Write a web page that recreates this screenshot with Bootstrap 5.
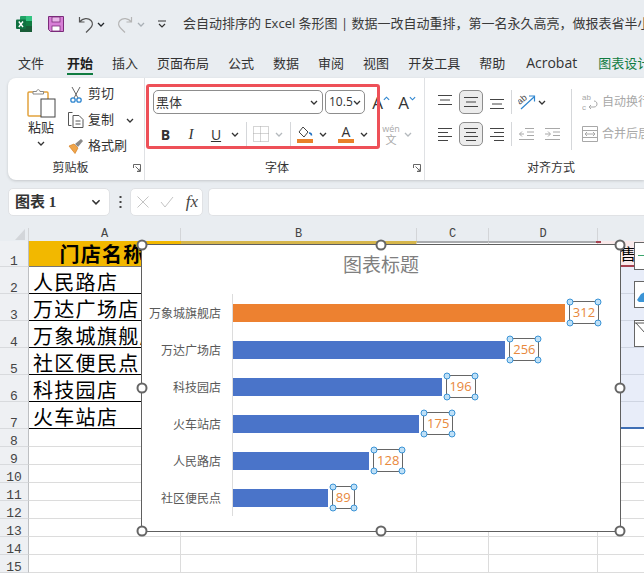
<!DOCTYPE html>
<html lang="zh-CN">
<head>
    <meta charset="UTF-8">
    <meta name="viewport" content="width=device-width, initial-scale=1.0">
    <title>Excel 条形图</title>
    <link href="https://cdn.jsdelivr.net/npm/bootstrap@5.3.0/dist/css/bootstrap.min.css" rel="stylesheet">
    <style>
        html, body { height: 100%; }
        body {
            width: 644px; height: 573px; overflow: hidden; background: #e9edf1; color: #333;
            font-family: "Open Sans", "Noto Sans CJK SC", sans-serif; font-size: 13px;
        }
        svg { display: block; flex: none; }
        .tw-6 { width: 6px; } .tw-10 { width: 10px; } .tw-14 { width: 14px; } .tw-16 { width: 16px; }
        .tw-18 { width: 18px; } .tw-20 { width: 20px; } .tw-24 { width: 24px; } .tw-25 { width: 25px; }
        .tw-26 { width: 26px; } .tw-30 { width: 30px; }
        .gl-2 { margin-left: 2px; } .gl-3 { margin-left: 3px; } .gl-5 { margin-left: 5px; } .gl-6 { margin-left: 6px; }
        .gl-12 { margin-left: 12px; } .gl-14 { margin-left: 14px; } .gl-16 { margin-left: 16px; }

        .title-row { height: 48px; padding-left: 16px; }
        .doc-title { font-size: 13px; white-space: nowrap; color: #3a3a3a; }
        .tab-row { height: 30px; padding-left: 18px; gap: 19px; font-size: 13px; line-height: 30px; white-space: nowrap; }
        .tab-on { font-weight: 700; color: #1f1f1f; position: relative; margin-left: 4px; }
        .tab-on::after { content: ""; position: absolute; left: 0; right: 0; top: 25px; height: 2px; background: #107c41; }
        .tab-latin { font-size: 14px; margin: 0 2px; }
        .tab-green { color: #107c41; }

        .ribbon { height: 102px; margin-left: 8px; background: #fff; border-radius: 8px 0 0 8px; box-shadow: 0 1px 3px rgba(0,0,0,.16); overflow: hidden; }
        .rgroup { flex: none; display: flex; flex-direction: column; border-right: 1px solid #dfe1e4; margin: 0; position: relative; }
        .rg-clip { width: 137px; }
        .rg-font { width: 280px; padding-left: 8px; }
        .rg-align { width: 244px; padding-left: 8px; border-right: 0; }
        .rg-body { height: 78px; }
        .rg-foot { height: 24px; margin-top: auto; font-size: 12px; line-height: 24px; }
        .rg-name { flex: 1 1 auto; text-align: center; }
        .rg-font .rg-foot { margin-left: -8px; }
        .rg-font .rg-name { padding-right: 4px; }
        .launch { width: 8px; margin: 0 3px 0 0; }
        .paste-col { width: 60px; padding: 10px 0 0 6px; font-size: 13px; line-height: 16px; }
        .paste-word { margin: 1px 0 6px; }
        .tool-line { height: 26px; gap: 4px; }
        .tool-col { padding-top: 3px; }
        .tool-ico { width: 16px; }
        .rrow { height: 24px; }
        .rrow + .rrow { margin-top: 8px; }
        .rows-top { padding-top: 12px; }
        .tcell { flex: none; height: 24px; display: flex; align-items: center; justify-content: center; }
        .tsep { flex: none; width: 1px; height: 24px; background: #d5d7da; }
        .tsep-b { margin: 0 4px 0 3px; }
        .sel-box { height: 24px; background: #fff; border: 1px solid #8d8d8d; border-radius: 5px; font-size: 13px; }
        .sel-face { width: 170px; padding: 0 4px 0 2px; font-family: "Noto Sans CJK SC", sans-serif; }
        .sel-size { width: 40px; margin-left: 2px; padding: 0 3px 0 3px; font-size: 12px; }
        .fmt { font-size: 14px; color: #333; }
        .fmt-b { font-weight: 700; }
        .fmt-i { font-style: italic; font-family: "Liberation Serif", serif; font-size: 15px; }
        .fmt-u { text-decoration: underline; }
        .big-a { font-size: 17px; line-height: 1; }
        .wen { flex-direction: column; color: #a9a9a9; font-size: 9px; line-height: 10px; }
        .wen b { font-weight: 400; font-size: 11px; line-height: 11px; }
        .al-on { background: #ececec; border: 1px solid #8d8d8d; border-radius: 5px; }
        .al-tall { width: 1px; height: 61px; background: #d5d7da; margin: -1px 10px 0 0; }
        .al-left { width: 138px; }
        .gray-tool { color: #a8a8a8; font-size: 12px; white-space: nowrap; gap: 4px; }

        .fx-row { height: 28px; margin-top: 8px; margin-left: 8px; }
        .fx-box { height: 28px; background: #fff; border: 1px solid #e0e2e5; border-radius: 5px; }
        .fx-name { width: 102px; padding: 0 8px 0 6px; font-family: "Liberation Serif", "Noto Sans CJK SC", serif; font-weight: 700; font-size: 15px; }
        .fx-dots { width: 20px; }
        .fx-btns { width: 73px; padding: 0 4px 0 6px; }
        .fx-sym { font-family: "Liberation Serif", serif; font-style: italic; font-size: 17px; color: #444; }
        .fx-input { flex: 1 1 auto; margin-left: 5px; border-right: 0; border-radius: 5px 0 0 5px; }

        .sheet { position: relative; margin-top: 12px; height: 345px; }
        .sheet-grid {
            display: grid; height: 345px; background: #fff;
            grid-template-columns: 29px 152px 236px 72px 109px 46px;
            grid-template-rows: 13px 26px repeat(6, 27px) repeat(8, 18px);
        }
        .cell { border-right: 1px solid #dcdcdc; border-bottom: 1px solid #dcdcdc; overflow: hidden; white-space: nowrap; }
        .col-head { background: #e9edf1; border-bottom: 0; border-right: 1px solid #d3d5d8; font-family: "Liberation Mono", monospace; font-size: 12px; line-height: 13px; text-align: center; color: #444; }
        .row-head { background: #eef0f3; border-right: 1px solid #bdbfc2; border-bottom: 1px solid #d8dadd; font-family: "Liberation Mono", monospace; font-size: 13px; line-height: 8px; text-align: center; color: #444; display: flex; align-items: flex-end; justify-content: center; }
        .corner { background: #e9edf1; border-right: 1px solid #d3d5d8; display: flex; justify-content: flex-end; padding-right: 3px; }
        .store-cell { font-family: "Noto Sans CJK SC", sans-serif; font-size: 20px; line-height: 30px; letter-spacing: 1.3px; color: #000; padding-left: 4px; border-bottom: 1px solid #000; border-right: 0; }
        .store-head { background: #f2b800; font-weight: 700; text-align: center; padding: 0 6px 0 0; line-height: 26px; border-bottom-color: #777; }
        .top-gold { border-top: 3px solid #d6b64b; }
        .top-gray { border-top: 2px solid #a9abae; }
        .sales-head { background: #f9e9ea; border-bottom: 2px solid #a6404f; border-right: 0; font-family: "Noto Sans CJK SC", sans-serif; font-size: 16px; line-height: 24px; color: #000; padding-left: 6px; }
        .sales-cell { background: #e8edf9; border-right: 0; border-bottom-color: #cfd5e2; }
        .sales-last { border-bottom: 2px solid #3f6fb5; }

        .chart-box { position: absolute; left: 141px; top: 16px; width: 480px; height: 288px; background: #fff; border: 1px solid #5f5f5f; }
        .chart-title { height: 49px; font-family: "Noto Sans CJK SC", sans-serif; font-size: 19px; line-height: 38px; text-align: center; color: #7f7f7f; }
        .bar-row { height: 37px; font-family: "Noto Sans CJK SC", sans-serif; }
        .bar-name { width: 79px; margin-right: 11px; text-align: right; font-size: 12px; color: #595959; white-space: nowrap; }
        .bar-area { height: 37px; border-left: 1px solid #dcdcdc; }
        .bar-fill { height: 18px; background: #4a74c9; }
        .bar-top { background: #ed8130; }
        .data-tag { position: relative; width: 30px; height: 23px; margin-left: 4px; border: 1px solid #666; color: #e8883c; font-family: "Open Sans", sans-serif; font-size: 13px; line-height: 21px; text-align: center; }
        .data-tag.narrow { width: 23px; }
        .dot { position: absolute; width: 7px; height: 7px; border-radius: 50%; background: #bfe0f7; border: 1px solid #3b94d6; transform: translate(-50%, -50%); }
        .grip { position: absolute; width: 11px; height: 11px; border-radius: 50%; background: #fff; border: 2px solid #666; transform: translate(-50%, -50%); }
        .at-l { left: 0; } .at-c { left: 50%; } .at-r { left: 100%; }
        .at-t { top: 0; } .at-m { top: 50%; } .at-b { top: 100%; }
        .side-tool { position: absolute; left: 634px; width: 10px; background: #fff; border: 1px solid #666; border-right: 0; overflow: hidden; }
        .st-1 { top: 14px; height: 28px; }
        .st-2 { top: 53px; height: 27px; }
        .st-3 { top: 92px; height: 27px; }
        .red-frame { position: absolute; left: 1px; top: 6px; width: 234px; height: 65px; border: 3px solid #ee5058; border-radius: 3px; pointer-events: none; }
        .red-tick { position: absolute; left: 596px; top: 13px; width: 5px; height: 2px; background: #a6404f; }
    </style>
</head>
<body>
    <svg width="0" height="0" class="position-absolute">
        <symbol id="chev" viewBox="0 0 8 5"><path d="M1 1l3 3 3-3" fill="none" stroke="currentColor" stroke-width="1.3"/></symbol>
        <symbol id="launch" viewBox="0 0 8 8"><path d="M.5 4V.5H7.500V7.500H4M2.500 2.500L7 7M7 4.500V7H4.500" fill="none" stroke="#666" stroke-width="1"/></symbol>
        <symbol id="al-top" viewBox="0 0 16 16"><path d="M1 1.500h14M3 6h10M1 10.500h14" stroke="#444" fill="none"/></symbol>
        <symbol id="al-mid" viewBox="0 0 16 16"><path d="M1 3.500h14M3 8h10M1 12.500h14" stroke="#444" fill="none"/></symbol>
        <symbol id="al-bot" viewBox="0 0 16 16"><path d="M1 5.500h14M3 10h10M1 14.500h14" stroke="#444" fill="none"/></symbol>
        <symbol id="t-left" viewBox="0 0 16 16"><path d="M1 2.500h14M1 6.500h10M1 10.500h14M1 14.500h10" stroke="#444" fill="none"/></symbol>
        <symbol id="t-mid" viewBox="0 0 16 16"><path d="M1 2.500h14M3 6.500h10M1 10.500h14M3 14.500h10" stroke="#444" fill="none"/></symbol>
        <symbol id="t-right" viewBox="0 0 16 16"><path d="M1 2.500h14M5 6.500h10M1 10.500h14M5 14.500h10" stroke="#444" fill="none"/></symbol>
    </svg>

    <!-- title bar -->
    <div class="title-row d-flex align-items-center">
        <svg width="16" height="16" viewBox="0 0 16 16">
            <rect x="4" width="12" height="16" rx="1" fill="#21a366"/>
            <rect x="10" width="6" height="5" fill="#33c481"/>
            <rect x="10" y="5" width="6" height="5" fill="#107c41"/>
            <rect x="4" y="10" width="12" height="6" fill="#185c37"/>
            <rect y="3.500" width="10" height="9.500" rx="1" fill="#0f7040"/>
            <path d="M2.800 5.500L7 11M7 5.500L2.800 11" stroke="#fff" stroke-width="1.400"/>
        </svg>
        <svg class="ms-3" width="16" height="16" viewBox="0 0 16 16">
            <path d="M.5.500h15v15H2.500l-2-2z" fill="#d77fd6" stroke="#7a2b7a"/>
            <rect x="4" y="1" width="8" height="5" fill="#e9b7e8" stroke="#7a2b7a" stroke-width=".8"/>
            <rect x="4" y="10" width="8" height="5" fill="#fff" stroke="#7a2b7a" stroke-width=".8"/>
        </svg>
        <svg class="gl-14" width="16" height="17" viewBox="0 0 16 17">
            <path d="M1.500 1v5h5M1.500 6C5 2 10 1.500 13 4.500c2.500 2.500 1.500 6-1 8l-4 4" fill="none" stroke="#555" stroke-width="1.200"/>
        </svg>
        <svg class="gl-3 text-dark" width="8" height="5"><use href="#chev"/></svg>
        <svg class="gl-12" width="16" height="17" viewBox="0 0 16 17">
            <path d="M14.500 1v5h-5M14.500 6C11 2 6 1.500 3 4.500c-2.500 2.500-1.500 6 1 8l4 4" fill="none" stroke="#b5b5b5" stroke-width="1.200"/>
        </svg>
        <svg class="ms-1 text-secondary opacity-50" width="8" height="5"><use href="#chev"/></svg>
        <svg class="gl-12" width="10" height="9" viewBox="0 0 10 9"><path d="M1 1h8M2 4l3 3 3-3" fill="none" stroke="#333" stroke-width="1.200"/></svg>
        <div class="doc-title gl-16">会自动排序的 Excel 条形图 | 数据一改自动重排，第一名永久高亮，做报表省半小时.xlsx</div>
    </div>

    <!-- tabs -->
    <div class="tab-row d-flex">
        <span>文件</span><span class="tab-on">开始</span><span>插入</span><span>页面布局</span><span>公式</span><span>数据</span><span>审阅</span><span>视图</span><span>开发工具</span><span>帮助</span><span class="tab-latin">Acrobat</span><span class="tab-green">图表设计</span>
    </div>

    <!-- ribbon -->
    <div class="ribbon d-flex">
        <div class="rgroup rg-clip">
            <div class="rg-body d-flex">
                <div class="paste-col d-flex flex-column align-items-center">
                    <svg width="29" height="30" viewBox="0 0 29 30">
                        <rect x="1" y="4" width="20" height="24" rx="1" fill="#fff" stroke="#e2a23c" stroke-width="1.500"/>
                        <path d="M6 6V3.500h3.500C10 1 12.500 1 13 3.500h3.500V6z" fill="#fff" stroke="#888"/>
                        <rect x="14" y="11" width="14" height="18" fill="#fff" stroke="#444"/>
                    </svg>
                    <span class="paste-word">粘贴</span>
                    <svg width="8" height="5"><use href="#chev"/></svg>
                </div>
                <div class="tool-col">
                    <div class="tool-line d-flex align-items-center">
                        <svg class="tool-ico" height="17" viewBox="0 0 16 17">
                            <path d="M4 1l6 11M12 1L6 12" stroke="#666" fill="none"/>
                            <circle cx="5" cy="14" r="2.200" fill="#fff" stroke="#2f86d0" stroke-width="1.300"/>
                            <circle cx="11" cy="14" r="2.200" fill="#fff" stroke="#2f86d0" stroke-width="1.300"/>
                        </svg>
                        <span>剪切</span>
                    </div>
                    <div class="tool-line d-flex align-items-center">
                        <svg class="tool-ico" height="16" viewBox="0 0 16 16">
                            <path d="M4.500.500H.500v13h3" fill="none" stroke="#555"/>
                            <path d="M5 3.500h6l4 4v8H5z" fill="#fff" stroke="#555"/>
                            <path d="M7.500 9h5M7.500 12h5" stroke="#555"/>
                        </svg>
                        <span>复制</span>
                        <svg class="ms-2" width="8" height="5"><use href="#chev"/></svg>
                    </div>
                    <div class="tool-line d-flex align-items-center">
                        <svg class="tool-ico" height="16" viewBox="0 0 16 16">
                            <path d="M1 8l5-2 4 4-3 5.500z" fill="#f0a54a" stroke="#d47f22" stroke-width=".7"/>
                            <path d="M7 6l6-5 2 2-5 6z" fill="#8a8a8a"/>
                        </svg>
                        <span>格式刷</span>
                    </div>
                </div>
            </div>
            <div class="rg-foot d-flex align-items-center">
                <span class="rg-name">剪贴板</span>
                <svg class="launch" width="8" height="8"><use href="#launch"/></svg>
            </div>
        </div>

        <div class="rgroup rg-font">
            <div class="rg-body rows-top">
                <div class="rrow d-flex align-items-center">
                    <div class="sel-box sel-face d-flex align-items-center justify-content-between"><span>黑体</span><svg width="8" height="5"><use href="#chev"/></svg></div>
                    <div class="sel-box sel-size d-flex align-items-center justify-content-between"><span>10.5</span><svg width="8" height="5"><use href="#chev"/></svg></div>
                    <div class="tcell big-a tw-20 gl-6"><span>A</span><svg class="mb-2" width="7" height="5" viewBox="0 0 8 5"><path d="M1 4l3-3 3 3" fill="none" stroke="#2f86d0" stroke-width="1.300"/></svg></div>
                    <div class="tcell big-a tw-20 gl-6"><span>A</span><svg class="mb-2" width="7" height="5" color="#2f86d0"><use href="#chev"/></svg></div>
                </div>
                <div class="rrow d-flex align-items-center">
                    <div class="tcell fmt fmt-b tw-25">B</div>
                    <div class="tcell fmt fmt-i tw-26">I</div>
                    <div class="tcell fmt fmt-u tw-24">U</div>
                    <div class="tcell tw-14"><svg width="8" height="5"><use href="#chev"/></svg></div>
                    <div class="tsep mx-1"></div>
                    <div class="tcell tw-20">
                        <svg width="16" height="16" viewBox="0 0 16 16"><path d="M.5.500h15v15H.5zM7.500.5v15M.5 7.500h15M4 4.500h.01M11 4.500h.01M4 11h.01M11 11h.01" fill="none" stroke="#aaa" stroke-dasharray="1 1"/></svg>
                    </div>
                    <div class="tcell tw-16 text-secondary opacity-50"><svg width="8" height="5"><use href="#chev"/></svg></div>
                    <div class="tsep tsep-b"></div>
                    <div class="tcell tw-20">
                        <svg width="16" height="17" viewBox="0 0 16 17">
                            <path d="M6 1l5 5-4 5-5-5z" fill="#fff" stroke="#444"/>
                            <path d="M12 7c1.500 0 2.500 1 2.500 2.500" fill="none" stroke="#1f6fc0" stroke-width="1.500"/>
                            <rect y="13" width="16" height="4" fill="#e8812a"/>
                        </svg>
                    </div>
                    <div class="tcell tw-16"><svg width="8" height="5"><use href="#chev"/></svg></div>
                    <div class="tcell tw-30 flex-column">
                        <span class="fmt lh-1">A</span>
                        <svg width="16" height="4"><rect width="16" height="4" fill="#e8812a"/></svg>
                    </div>
                    <div class="tcell tw-6"><svg width="8" height="5"><use href="#chev"/></svg></div>
                    <div class="tcell wen tw-20 gl-14"><span>wén</span><b>文</b></div>
                    <div class="tcell tw-14 text-secondary opacity-50"><svg width="8" height="5"><use href="#chev"/></svg></div>
                </div>
            </div>
            <div class="rg-foot d-flex align-items-center">
                <span class="rg-name">字体</span>
                <svg class="launch" width="8" height="8"><use href="#launch"/></svg>
            </div>
            <div class="red-frame"></div>
        </div>

        <div class="rgroup rg-align">
            <div class="rg-body rows-top d-flex">
                <div class="al-left">
                    <div class="rrow d-flex align-items-center">
                        <div class="tcell tw-24"><svg width="16" height="16"><use href="#al-top"/></svg></div>
                        <div class="tcell al-on tw-24 gl-2"><svg width="16" height="16"><use href="#al-mid"/></svg></div>
                        <div class="tcell tw-24 gl-2"><svg width="16" height="16"><use href="#al-bot"/></svg></div>
                        <div class="tsep gl-2"></div>
                        <div class="tcell tw-20 gl-5">
                            <svg width="18" height="18" viewBox="0 0 18 18">
                                <text x="0" y="9" font-size="9" fill="#444" transform="rotate(-40 5 8)" font-family="Liberation Sans, sans-serif">ab</text>
                                <path d="M3 16L16 4M11 3h5.500v5.500" fill="none" stroke="#2f86d0" stroke-width="1.200"/>
                            </svg>
                        </div>
                        <div class="tcell tw-10"><svg width="8" height="5"><use href="#chev"/></svg></div>
                    </div>
                    <div class="rrow d-flex align-items-center">
                        <div class="tcell tw-24"><svg width="16" height="16"><use href="#t-left"/></svg></div>
                        <div class="tcell al-on tw-24 gl-2"><svg width="16" height="16"><use href="#t-mid"/></svg></div>
                        <div class="tcell tw-24 gl-2"><svg width="16" height="16"><use href="#t-right"/></svg></div>
                        <div class="tsep gl-2"></div>
                        <div class="tcell tw-18 gl-5">
                            <svg width="15" height="14" viewBox="0 0 15 14"><path d="M6 1.500h9M8 5h7M8 8.500h7M0 12.500h15M5 7H.5M3 4.500L.5 7 3 9.500" fill="none" stroke="#a8a8a8"/></svg>
                        </div>
                        <div class="tcell tw-18 ms-2">
                            <svg width="15" height="14" viewBox="0 0 15 14"><path d="M0 1.500h15M0 12.500h15M8 5h7M8 8.500h7M0 7h5M3 4.500L5.500 7 3 9.500" fill="none" stroke="#a8a8a8"/></svg>
                        </div>
                    </div>
                </div>
                <div class="al-tall"></div>
                <div>
                    <div class="rrow gray-tool d-flex align-items-center">
                        <svg width="16" height="18" viewBox="0 0 16 18">
                            <text x="0" y="7" font-size="8" fill="#a8a8a8" font-family="Liberation Sans, sans-serif">ab</text>
                            <text x="0" y="17" font-size="8" fill="#a8a8a8" font-family="Liberation Sans, sans-serif">c</text>
                            <path d="M12 8c4 0 4 6 0 6H7M9 12l-2 2 2 2" fill="none" stroke="#a8a8a8"/>
                        </svg>
                        <span>自动换行</span>
                    </div>
                    <div class="rrow gray-tool d-flex align-items-center">
                        <svg width="16" height="16" viewBox="0 0 16 16"><path d="M.5.500h15v15H.5zM.5 4.500h15M.5 11.500h15M3 8h10M5 6L3 8l2 2M11 6l2 2-2 2" fill="none" stroke="#a8a8a8"/></svg>
                        <span>合并后居中</span>
                    </div>
                </div>
            </div>
            <div class="rg-foot d-flex align-items-center"><span class="rg-name">对齐方式</span></div>
        </div>
    </div>

    <!-- formula bar -->
    <div class="fx-row d-flex align-items-center">
        <div class="fx-box fx-name d-flex align-items-center justify-content-between"><span>图表 1</span><svg width="10" height="6" viewBox="0 0 8 5"><use href="#chev"/></svg></div>
        <div class="fx-dots d-flex flex-column align-items-center gap-1">
            <svg width="3" height="12" viewBox="0 0 3 12"><path d="M1.500 0v2M1.500 5v2M1.500 10v2" stroke="#444" stroke-width="2"/></svg>
        </div>
        <div class="fx-box fx-btns d-flex align-items-center justify-content-between">
            <svg width="12" height="12" viewBox="0 0 12 12"><path d="M.5.500l11 11M11.500.500l-11 11" stroke="#c4c4c4"/></svg>
            <svg width="14" height="12" viewBox="0 0 14 12"><path d="M1 6l4 5 8-10" fill="none" stroke="#c4c4c4"/></svg>
            <span class="fx-sym">fx</span>
        </div>
        <div class="fx-box fx-input"></div>
    </div>

    <!-- worksheet -->
    <div class="sheet">
        <div class="sheet-grid" id="sheetGrid"></div>
        <div class="red-tick"></div>
        <div class="side-tool st-1"><svg width="10" height="28"><path d="M3 12.500h7" stroke="#3aa76d"/></svg></div>
        <div class="side-tool st-2"><svg width="10" height="27"><path d="M2 18l4-6 4-2v10H4z" fill="#3b94d6"/></svg></div>
        <div class="side-tool st-3"><svg width="10" height="27"><path d="M0 2h10M1 2l9 10" fill="none" stroke="#555"/></svg></div>
        <div class="chart-box" id="chartBox">
            <div class="chart-title">图表标题</div>
            <div id="chartRows"></div>
            <div class="grip at-l at-t"></div><div class="grip at-c at-t"></div><div class="grip at-r at-t"></div>
            <div class="grip at-l at-m"></div><div class="grip at-r at-m"></div>
            <div class="grip at-l at-b"></div><div class="grip at-c at-b"></div><div class="grip at-r at-b"></div>
        </div>
    </div>

    <script src="https://cdn.jsdelivr.net/npm/bootstrap@5.3.0/dist/js/bootstrap.bundle.min.js"></script>
    <script>
        // column A of the sheet, in sheet order
        const stores = ['人民路店', '万达广场店', '万象城旗舰店', '社区便民点', '科技园店', '火车站店'];
        // chart rows, already sorted by value
        const sales = [
            ['万象城旗舰店', 312], ['万达广场店', 256], ['科技园店', 196],
            ['火车站店', 175], ['人民路店', 128], ['社区便民点', 89]
        ];

        let cells = '<div class="corner"><svg width="10" height="12" viewBox="0 0 10 12"><path d="M10 1v11H0z" fill="#d3d6da"/></svg></div>';
        ['A', 'B', 'C', 'D'].forEach(c => { cells += `<div class="col-head">${c}</div>`; });
        cells += '<div class="col-head border-0"></div>';

        for (let r = 1; r <= 15; r++) {
            cells += `<div class="row-head">${r}</div>`;
            if (r === 1) {
                cells += '<div class="cell store-cell store-head">门店名称</div>';
                cells += '<div class="cell top-gold"></div><div class="cell top-gray"></div><div class="cell top-gray"></div>';
                cells += '<div class="cell sales-head">销售额</div>';
            } else {
                if (r <= 7) cells += `<div class="cell store-cell">${stores[r - 2]}</div>`;
                else cells += '<div class="cell"></div>';
                cells += '<div class="cell"></div><div class="cell"></div><div class="cell"></div>';
                if (r < 7) cells += '<div class="cell sales-cell"></div>';
                else if (r === 7) cells += '<div class="cell sales-cell sales-last"></div>';
                else cells += '<div class="cell border-end-0"></div>';
            }
        }
        document.getElementById('sheetGrid').innerHTML = cells;

        const dots = '<i class="dot at-l at-t"></i><i class="dot at-r at-t"></i><i class="dot at-l at-b"></i><i class="dot at-r at-b"></i>';
        document.getElementById('chartRows').innerHTML = sales.map(([name, val], i) => `
            <div class="bar-row d-flex align-items-center">
                <div class="bar-name">${name}</div>
                <div class="bar-area d-flex align-items-center">
                    <div class="bar-fill ${i === 0 ? 'bar-top' : ''}" style="width:${(val * 1.0641).toFixed(1)}px"></div>
                    <div class="data-tag ${val < 100 ? 'narrow' : ''}">${val}${dots}</div>
                </div>
            </div>`).join('');
    </script>
</body>
</html>
